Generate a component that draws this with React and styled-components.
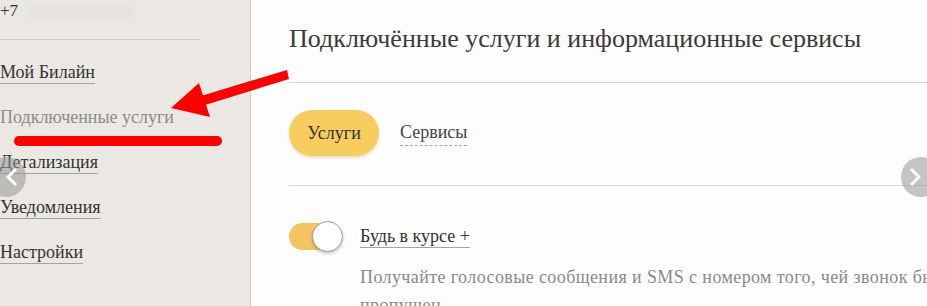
import React from "react";
import styled, { createGlobalStyle } from "styled-components";

const GlobalStyle = createGlobalStyle`
  html, body {
    margin: 0;
    padding: 0;
    background: #fdfdfd;
    overflow: hidden;
  }
  * {
    box-sizing: border-box;
  }
`;

const Page = styled.div`
  position: relative;
  display: flex;
  width: 927px;
  height: 306px;
  overflow: hidden;
  font-family: "Liberation Serif", "DejaVu Serif", serif;
  color: #333;
`;

const Sidebar = styled.aside`
  width: 251px;
  flex-shrink: 0;
  background: #ebe8e3;
  border-right: 1px solid #d3d0cb;
`;

const Phone = styled.div`
  display: flex;
  align-items: center;
  height: 22px;
  font-size: 17px;
  color: #333;
`;

const Blurred = styled.span`
  display: inline-block;
  width: 108px;
  height: 14px;
  margin-left: 9px;
  background: #e5e2dd;
  filter: blur(3px);
`;

const Divider = styled.hr`
  width: 200px;
  margin: 17px 0 0;
  border: none;
  border-top: 1px solid #cfccc7;
`;

const Nav = styled.nav`
  display: flex;
  flex-direction: column;
  padding-top: 21px;
`;

const NavItem = styled.div`
  height: 45px;
  font-size: 18px;
  line-height: 22px;
`;

const NavLink = styled.span`
  color: ${(p) => (p.$active ? "#8c8b89" : "#333")};
  text-decoration: ${(p) => (p.$active ? "none" : "underline")};
  text-decoration-color: #a5a3a0;
  text-underline-offset: 5px;
  text-decoration-thickness: 1px;
`;

const Main = styled.main`
  flex: 1;
  padding-left: 38px;
  background: #fdfdfd;
`;

const Title = styled.h1`
  margin: 0;
  padding-top: 23px;
  height: 83px;
  font-size: 26px;
  line-height: 32px;
  font-weight: 400;
  color: #3a3a3a;
  border-bottom: 1px solid #d6d6d6;
`;

const Tabs = styled.div`
  display: flex;
  align-items: center;
  gap: 21px;
  height: 103px;
  border-bottom: 1px solid #d6d6d6;
`;

const Pill = styled.button`
  width: 90px;
  height: 46px;
  border: none;
  border-radius: 23px;
  background: #f6cd5e;
  box-shadow: 0 2px 3px rgba(180, 140, 40, 0.25);
  font-family: inherit;
  font-size: 18px;
  color: #333;
  padding: 0;
  margin-top: -2px;
`;

const TabLink = styled.span`
  font-size: 18px;
  color: #444;
  padding-bottom: 2px;
  border-bottom: 1px dashed #a9a9a9;
`;

const Service = styled.div`
  display: grid;
  grid-template-columns: 54px 1fr;
  column-gap: 17px;
  padding-top: 36px;
`;

const Toggle = styled.div`
  position: relative;
  width: 52px;
  height: 27px;
  border-radius: 14px;
  background: #f2c462;
  margin-top: 1px;
`;

const Knob = styled.div`
  position: absolute;
  right: -2px;
  top: -2px;
  width: 31px;
  height: 31px;
  border-radius: 50%;
  background: #fff;
  border: 1px solid #9b9b9b;
  box-shadow: 0 2px 3px rgba(0, 0, 0, 0.2);
`;

const ServiceBody = styled.div``;

const ServiceName = styled.span`
  font-size: 18px;
  line-height: 28px;
  color: #333;
  text-decoration: underline;
  text-decoration-color: #a5a3a0;
  text-underline-offset: 5px;
  text-decoration-thickness: 1px;
`;

const Description = styled.p`
  margin: 13px 0 0;
  width: 640px;
  font-size: 18px;
  letter-spacing: 0.4px;
  line-height: 28px;
  color: #8a8a8a;
`;

const Annotation = styled.svg`
  position: absolute;
  left: 0;
  top: 0;
  pointer-events: none;
`;

const Arrow = styled.button`
  position: absolute;
  top: 157px;
  ${(p) => (p.$side === "left" ? "left: -14px;" : "right: -14px;")}
  width: 40px;
  height: 40px;
  border: none;
  border-radius: 50%;
  background: rgba(150, 150, 150, 0.55);
  display: flex;
  align-items: center;
  justify-content: ${(p) => (p.$side === "left" ? "flex-end" : "flex-start")};
  padding: 0 8px;
`;

const Chevron = ({ dir }) => (
  <svg width="12" height="20" viewBox="0 0 12 20">
    <path
      d={dir === "left" ? "M10 2 L2 10 L10 18" : "M2 2 L10 10 L2 18"}
      fill="none"
      stroke="#fff"
      strokeWidth="3"
    />
  </svg>
);

const navItems = [
  { label: "Мой Билайн" },
  { label: "Подключенные услуги", active: true },
  { label: "Детализация" },
  { label: "Уведомления" },
  { label: "Настройки" },
];

export default function App() {
  return (
    <>
      <GlobalStyle />
      <Page>
        <Sidebar>
          <Phone>
            +7
            <Blurred />
          </Phone>
          <Divider />
          <Nav>
            {navItems.map((item) => (
              <NavItem key={item.label}>
                <NavLink $active={item.active}>{item.label}</NavLink>
              </NavItem>
            ))}
          </Nav>
        </Sidebar>
        <Main>
          <Title>Подключённые услуги и информационные сервисы</Title>
          <Tabs>
            <Pill>Услуги</Pill>
            <TabLink>Сервисы</TabLink>
          </Tabs>
          <Service>
            <Toggle>
              <Knob />
            </Toggle>
            <ServiceBody>
              <ServiceName>Будь в курсе +</ServiceName>
              <Description>
                Получайте голосовые сообщения и SMS с номером того, чей звонок был
                пропущен
              </Description>
            </ServiceBody>
          </Service>
        </Main>

        <Annotation width="927" height="306">
          <line x1="19" y1="141" x2="217" y2="141" stroke="#ff0000" strokeWidth="10" strokeLinecap="round" />
          <polygon points="287,70 289,79 205,105 201,96" fill="#ff0000" />
          <polygon points="199,83 171,108 210,117" fill="#ff0000" />
        </Annotation>

        <Arrow $side="left">
          <Chevron dir="left" />
        </Arrow>
        <Arrow $side="right">
          <Chevron dir="right" />
        </Arrow>
      </Page>
    </>
  );
}
